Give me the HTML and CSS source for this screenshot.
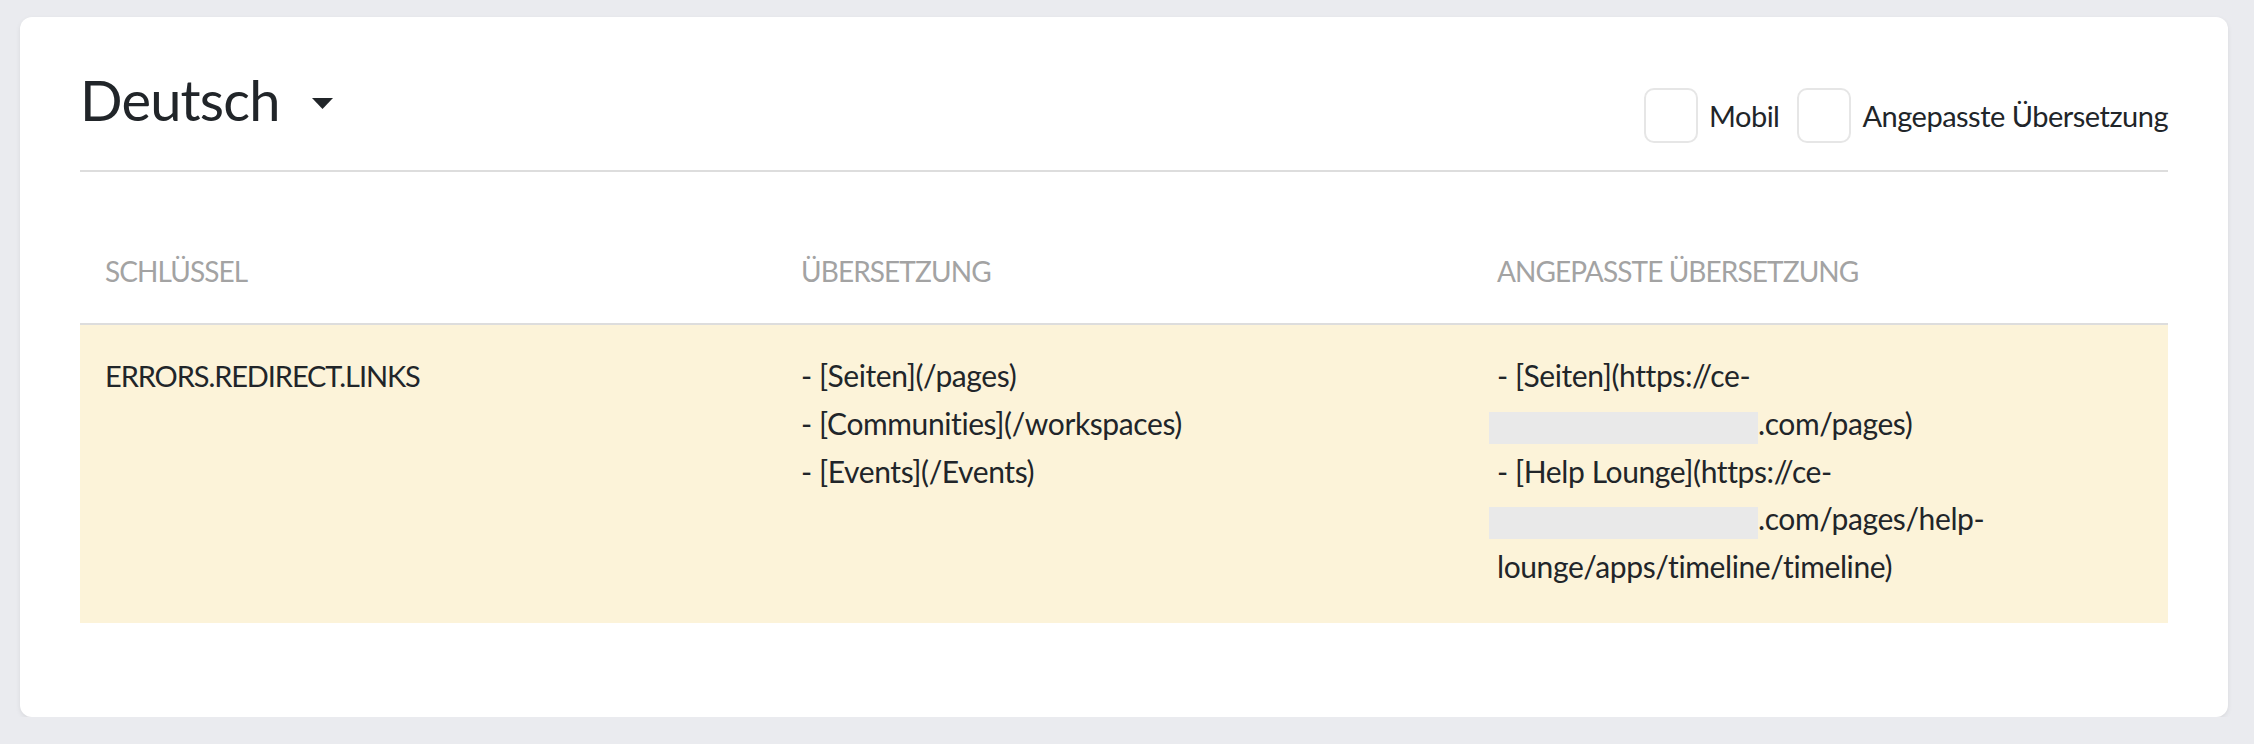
FILE: index.html
```
<!DOCTYPE html>
<html lang="de">

<head>
    <meta charset="UTF-8">
    <meta name="viewport" content="width=device-width, initial-scale=1.0">
    <title>Übersetzungen</title>
    <link rel="stylesheet" href="styles.css">
</head>

<body>
    <div class="card">
        <div class="card-head">
            <div class="lang-select">
                <span>Deutsch</span>
                <svg class="caret" width="21" height="11" viewBox="0 0 21 11">
                    <path d="M0 0 L21 0 L10.5 11 Z" fill="#212529" />
                </svg>
            </div>
            <div class="filters">
                <label class="check">
                    <input type="checkbox">
                    <span>Mobil</span>
                </label>
                <label class="check">
                    <input type="checkbox">
                    <span>Angepasste Übersetzung</span>
                </label>
            </div>
        </div>

        <table class="trans-table">
            <thead>
                <tr>
                    <th>Schlüssel</th>
                    <th>Übersetzung</th>
                    <th>Angepasste Übersetzung</th>
                </tr>
            </thead>
            <tbody>
                <tr class="custom">
                    <td class="key">ERRORS.REDIRECT.LINKS</td>
                    <td>
                        - [Seiten](/pages)<br>
                        - [Communities](/workspaces)<br>
                        - [Events](/Events)
                    </td>
                    <td>
                        - [Seiten](https://ce-<br>
                        <span class="hidden-host"></span>.com/pages)<br>
                        - [Help Lounge](https://ce-<br>
                        <span class="hidden-host"></span>.com/pages/help-<br>
                        lounge/apps/timeline/timeline)
                    </td>
                </tr>
            </tbody>
        </table>
    </div>
</body>

</html>
```

FILE: styles.css
```
* {
    box-sizing: border-box;
}

body {
    margin: 0;
    padding: 17px 26px 0 20px;
    background: #eaebef;
    font-family: Lato, "Open Sans", sans-serif;
    color: #212529;
}

.card {
    height: 700px;
    background: #fff;
    border-radius: 12px;
    box-shadow: 0px 2px 5px rgba(0, 0, 0, 0.08);
    padding: 49px 60px 0 60px;
}

.card-head {
    display: flex;
    justify-content: space-between;
    align-items: flex-start;
    padding-bottom: 27px;
    border-bottom: 2px solid #dddddd;
}

.lang-select {
    display: flex;
    align-items: center;
    gap: 32px;
    font-size: 56px;
    letter-spacing: -0.8px;
    line-height: 1.2;
}

.caret {
    margin-top: 8px;
}

.filters {
    display: flex;
    align-items: center;
    gap: 18px;
    margin-top: 22px;
}

.check {
    display: flex;
    align-items: center;
    gap: 11px;
    font-size: 29px;
    letter-spacing: -0.5px;
}

.check input {
    appearance: none;
    -webkit-appearance: none;
    margin: 0;
    width: 54px;
    height: 55px;
    border: 2px solid #e6e6e6;
    border-radius: 10px;
    background: #fff;
}

.trans-table {
    width: 100%;
    margin-top: 32px;
    border-collapse: collapse;
    table-layout: fixed;
}

.trans-table th {
    text-align: left;
    text-transform: uppercase;
    font-weight: normal;
    font-size: 28px;
    letter-spacing: -0.9px;
    line-height: 1.5;
    color: #a3a3a3;
    padding: 46px 25px 31px 25px;
    border-bottom: 2px solid #dddddd;
}

.trans-table td {
    vertical-align: top;
    font-size: 30px;
    letter-spacing: -0.4px;
    line-height: 47.75px;
    padding: 27px 25px 32px 25px;
}

.trans-table td.key {
    font-size: 29px;
    letter-spacing: -1.1px;
}

.trans-table tr.custom td {
    background: #fcf3d9;
}

.hidden-host {
    display: inline-block;
    width: 269px;
    height: 32px;
    margin-left: -8px;
    vertical-align: -9px;
    background: #e9e9e9;
}
```
